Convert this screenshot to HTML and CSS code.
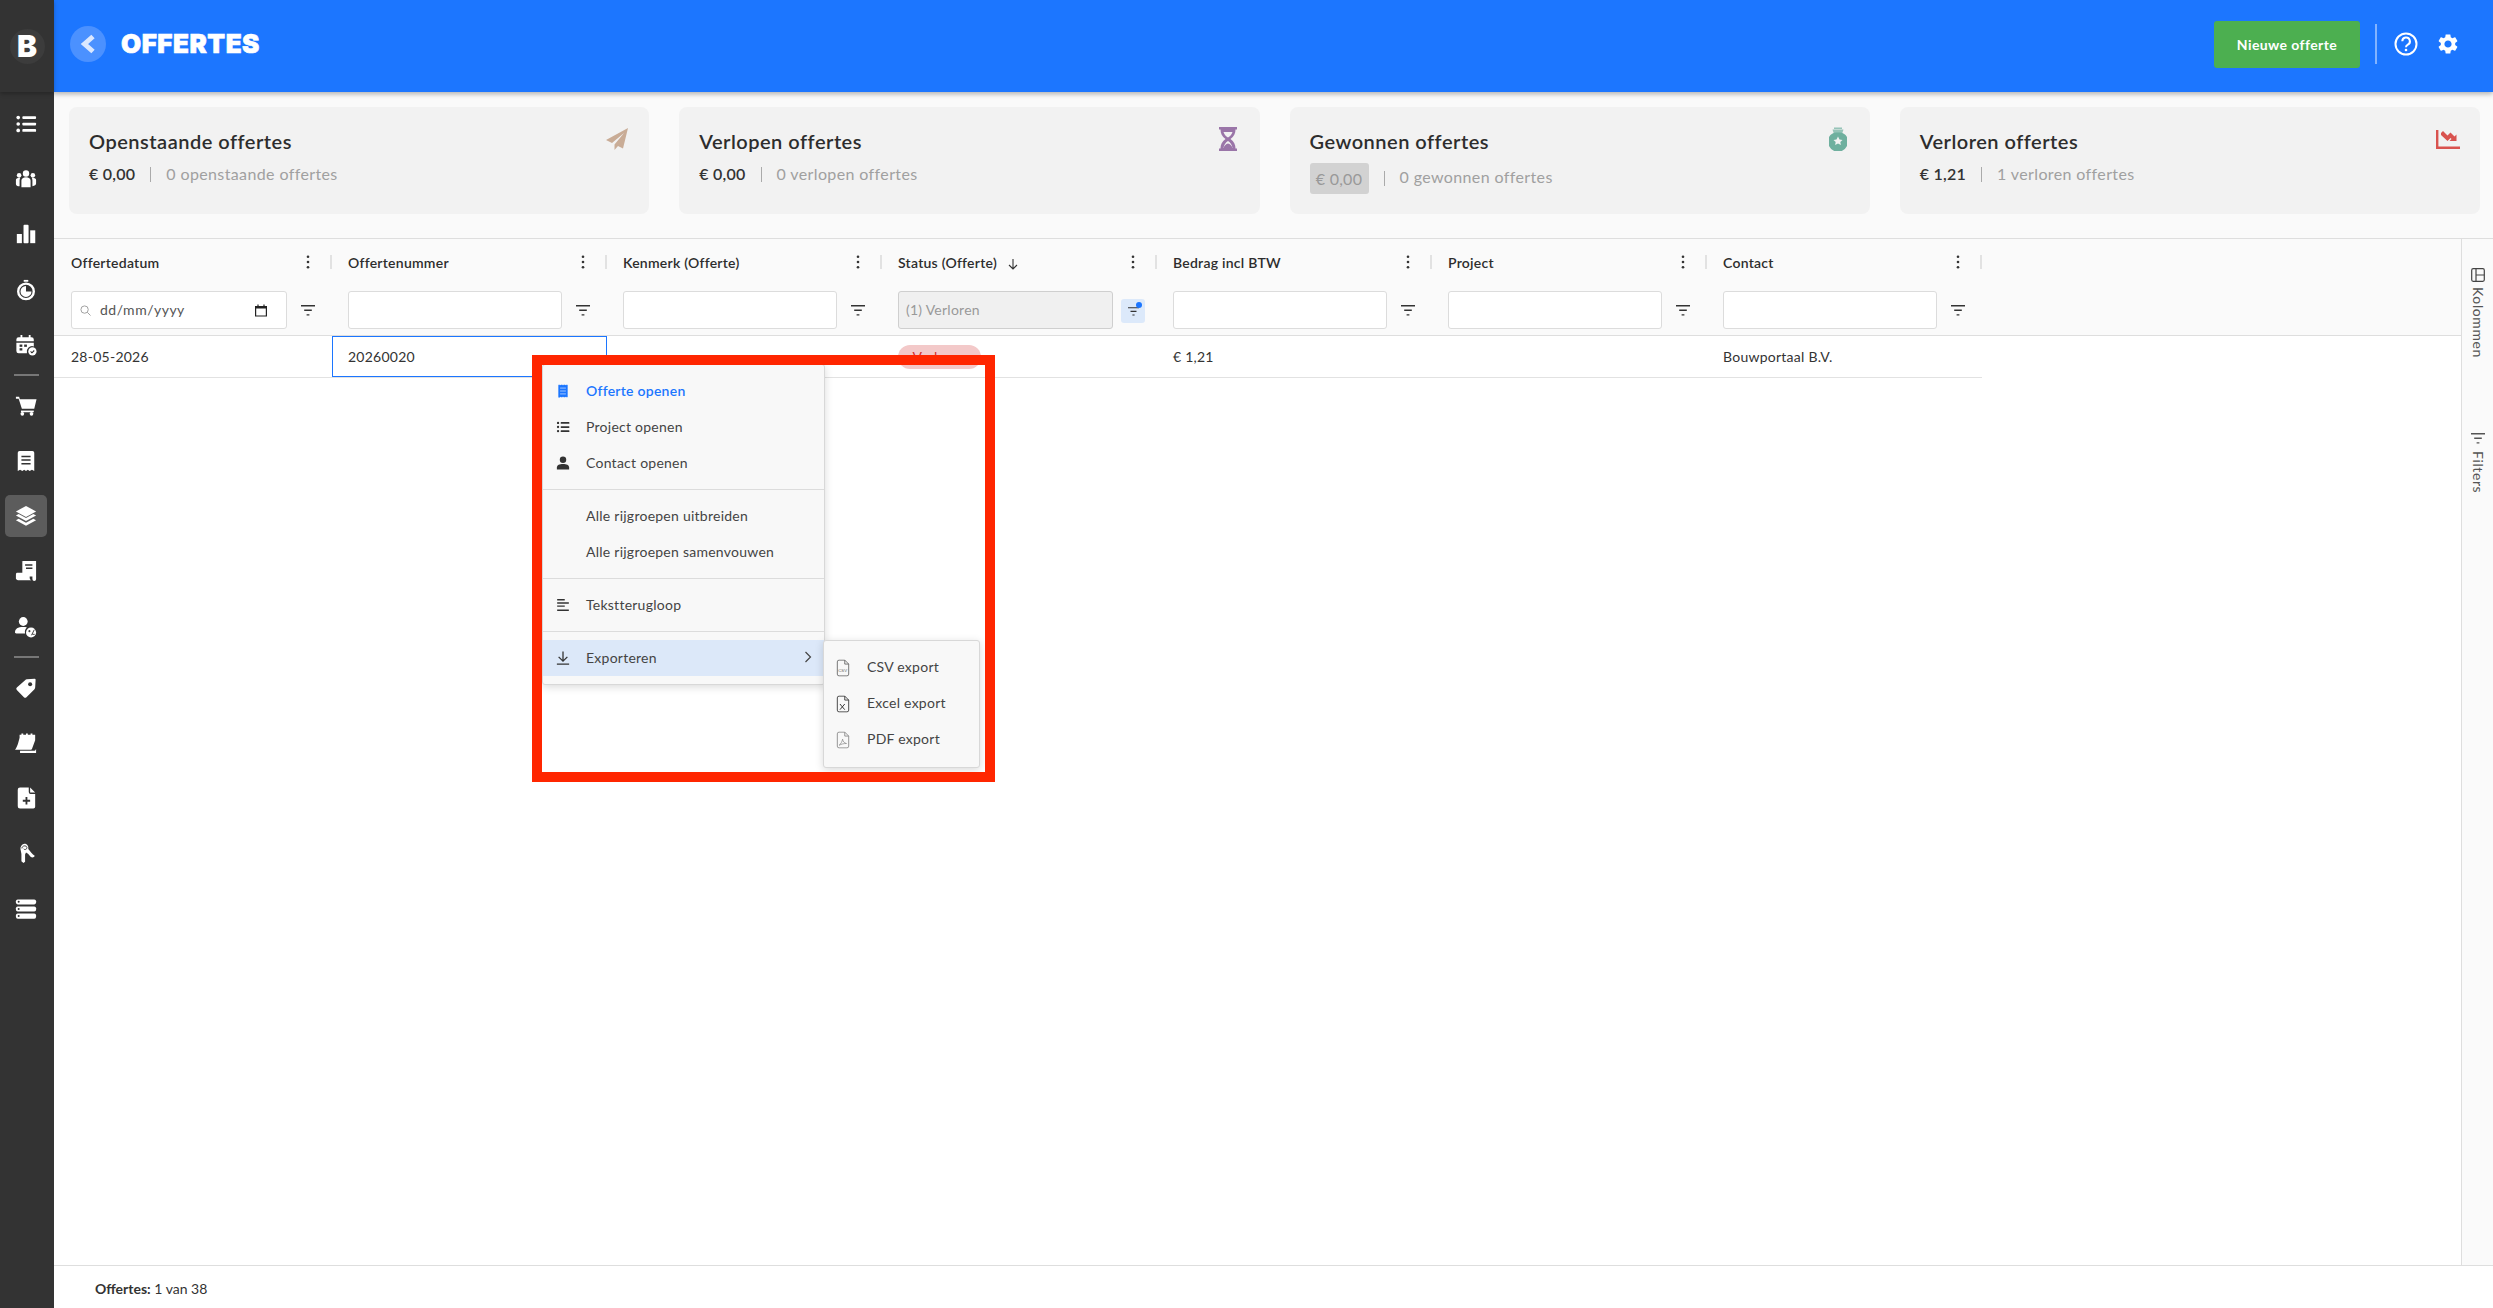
FILE: index.html
```html
<!DOCTYPE html>
<html lang="nl">
<head>
    <meta charset="UTF-8">
    <title>Offertes</title>
    <link rel="stylesheet" href="styles.css">
</head>
<body>
    <svg class="sprite" xmlns="http://www.w3.org/2000/svg">
        <symbol id="i-filter" viewBox="0 0 14 11"><path d="M0 .7h14M3.2 5.3h7.6M5.6 9.9h2.8" stroke="currentColor" stroke-width="1.4" fill="none"/></symbol>
        <symbol id="i-dots" viewBox="0 0 4 16"><circle cx="2" cy="2" r="1.5"/><circle cx="2" cy="8" r="1.5"/><circle cx="2" cy="14" r="1.5"/></symbol>
        <symbol id="i-receipt" viewBox="0 0 24 24"><path d="M4 1l1.300 1 1.300-1 1.300 1 1.400-1 1.300 1L12 1l1.300 1 1.400-1 1.300 1 1.400-1 1.300 1L20 1v22l-1.300-1-1.400 1-1.300-1-1.400 1-1.300-1-1.300 1-1.300-1-1.400 1-1.300-1-1.300 1L4 23z"/><path d="M7 7h10M7 12h10M7 17h10" stroke="#a9caff" stroke-width="1.600" fill="none"/></symbol>
        <symbol id="i-list" viewBox="0 0 24 24"><circle cx="3.500" cy="5" r="2"/><circle cx="3.500" cy="12" r="2"/><circle cx="3.500" cy="19" r="2"/><rect x="8" y="3.500" width="15" height="3" rx="1"/><rect x="8" y="10.500" width="15" height="3" rx="1"/><rect x="8" y="17.500" width="15" height="3" rx="1"/></symbol>
        <symbol id="i-file" viewBox="0 0 16 20"><path d="M1.500 3a2 2 0 0 1 2-2h6.500l4.500 4.500V17a2 2 0 0 1-2 2h-9a2 2 0 0 1-2-2zM10 1v4.500h4.500" fill="none" stroke="currentColor" stroke-width="1"/></symbol>
    </svg>

    <nav class="side">
        <div class="side-logo"><span class="logo-b">B</span></div>
        <div class="side-nav">
            <a class="nav-item"><svg viewBox="0 0 24 24"><use href="#i-list"/></svg></a>
            <a class="nav-item"><svg viewBox="0 0 24 24"><circle cx="12" cy="6" r="3.500"/><circle cx="4.500" cy="8" r="2.500"/><circle cx="19.500" cy="8" r="2.500"/><path d="M7 13.500c0-2 2-3.500 5-3.500s5 1.500 5 3.500V21H7zM1 13c0-1.500 1.500-2.500 3.500-2.500.5 0 1 0 1.200.2-.3.8-.7 1.800-.7 2.800v6.500C2.500 20 1 19 1 17.500zM23 13c0-1.500-1.500-2.500-3.500-2.500-.5 0-1 0-1.200.2.300.8.700 1.800.700 2.800v6.500c2.500-.5 4-1.500 4-3z"/></svg></a>
            <a class="nav-item"><svg viewBox="0 0 24 24"><rect x="2" y="12" width="5.500" height="10"/><rect x="9.300" y="2" width="5.500" height="20" rx="1"/><rect x="16.600" y="8" width="5.500" height="14"/></svg></a>
            <a class="nav-item"><svg viewBox="0 0 24 24"><path d="M9.500 1h5v2h-5z"/><circle cx="12" cy="13.500" r="8.500" fill="none" stroke="#fff" stroke-width="2.600"/><path d="M12 7.500v6h6a6 6 0 1 1-6-6z"/></svg></a>
            <a class="nav-item"><svg viewBox="0 0 24 24"><path d="M6 1h2v2.500h7V1h2v2.500h1a2.500 2.500 0 0 1 2.500 2.500v7.500a6 6 0 0 0-7.500 7.500H4a2.500 2.500 0 0 1-2.500-2.500V6A2.500 2.500 0 0 1 4 3.500h2zM1.500 8v1.500h19V8z"/><rect x="5" y="11.500" width="3" height="2.500" fill="#333"/><rect x="10" y="11.500" width="3" height="2.500" fill="#333"/><rect x="5" y="15.500" width="3" height="2.500" fill="#333"/><circle cx="19" cy="19" r="4.500"/><path d="M17 19l1.500 1.500L21 18" stroke="#333" stroke-width="1.200" fill="none"/></svg></a>
            <div class="nav-sep"></div>
            <a class="nav-item"><svg viewBox="0 0 24 24"><path d="M1 2h3.500l.8 2.500H23.500L21 15H7.500L4 4H1z"/><path d="M6.500 17h14v1.800h-14z"/><circle cx="8" cy="20.500" r="2"/><circle cx="18" cy="20.500" r="2"/></svg></a>
            <a class="nav-item"><svg viewBox="0 0 24 24"><path d="M3 3a2 2 0 0 1 2-2h14a2 2 0 0 1 2 2v20l-2.500-1.500L16 23l-2-1.500L12 23l-2-1.500L8 23l-2.500-1.500L3 23z"/><path d="M7 7h10M7 11h10M7 15h10" stroke="#333" stroke-width="1.600" fill="none"/></svg></a>
            <a class="nav-item active"><svg viewBox="0 0 24 24"><path d="M12 1l11 6-11 6L1 7z"/><path d="M1 11.500l3-1.600 8 4.400 8-4.400 3 1.600-11 6z"/><path d="M1 16.500l3-1.600 8 4.400 8-4.400 3 1.600-11 6z"/></svg></a>
            <a class="nav-item"><svg viewBox="0 0 24 24"><path d="M7 1h16v20a2 2 0 0 1-4 0V2H9zM8 2h11v16H8z"/><path d="M11 5.500h8M12 9h7" stroke="#333" stroke-width="1.600" fill="none"/><path d="M2 14h14v5c0 2 1 3 2 3H4a2.500 2.500 0 0 1-3-3v-3a2 2 0 0 1 1-2z"/></svg></a>
            <a class="nav-item"><svg viewBox="0 0 24 24"><circle cx="9" cy="6" r="4.800"/><path d="M0 18c0-4 3-6 9-6 1.500 0 3 .2 4 .5A6.500 6.500 0 0 0 11 19H1.500C.500 19 0 18.500 0 18z"/><circle cx="17.500" cy="18" r="5.500"/><path d="M14.500 16.500h2.500M15.700 15.300v2.400M18 21l3-6M19 20h2.500" stroke="#333" stroke-width="1" fill="none"/></svg></a>
            <div class="nav-sep"></div>
            <a class="nav-item"><svg viewBox="0 0 24 24"><path d="M13 2.500l8.500-.5a1 1 0 0 1 1 1l-.5 8.500a3 3 0 0 1-1 2L12.500 22a2 2 0 0 1-2.800 0L2 14.300a2 2 0 0 1 0-2.800L11 3.500a3 3 0 0 1 2-1z"/><circle cx="16.500" cy="8" r="2.200" fill="#333"/></svg></a>
            <a class="nav-item"><svg viewBox="0 0 24 24"><path d="M5 3h2V1.500h2V3h3V1.500h2V3h3V1.500h2V3h3v6l-3.500 9.500c-.2.500-.6.800-1.200.800H0c2.500-2.500 4-9 5-13z"/><path d="M5.500 20.500h15c1.200 0 2-.5 2.500-2V23H5.500z"/></svg></a>
            <a class="nav-item"><svg viewBox="0 0 24 24"><path d="M3 3a2.500 2.500 0 0 1 2.500-2.500H15v5a2 2 0 0 0 2 2h5v14a2 2 0 0 1-2 2H5.500A2.500 2.500 0 0 1 3 21z"/><path d="M16.500.500L22 6h-5.500z"/><path d="M12.500 11v8M8.500 15h8" stroke="#333" stroke-width="2" fill="none"/></svg></a>
            <a class="nav-item"><svg viewBox="0 0 24 24"><path d="M10.500 2a5 5 0 0 0-4.500 6l1 5v8l2.200 2 1.800-1.500v-8l1-2c2 1 3 2 5 4.500 1.500 1.500 4 1 4.500-1-2.500-1.500-5-5-7-7.500.5-3-1.500-5.500-4-5.500z"/><path d="M7.500 7c0-3 5-4 5.500-1 .3 2-2.500 3-3.500 1.500" stroke="#333" stroke-width="1" fill="none"/></svg></a>
            <a class="nav-item"><svg viewBox="0 0 24 24"><rect x="1" y="1.500" width="22" height="5.500" rx="2"/><rect x="1" y="9.200" width="22" height="5.500" rx="2"/><rect x="1" y="17" width="22" height="5.500" rx="2"/><circle cx="4" cy="4.200" r="1.100" fill="#333"/><circle cx="4" cy="12" r="1.100" fill="#333"/><circle cx="4" cy="19.700" r="1.100" fill="#333"/></svg></a>
        </div>
    </nav>

    <div class="main">
        <header class="topbar">
            <a class="back"><svg viewBox="0 0 16 20"><path d="M13 2.500L4.500 10l8.500 7.500" fill="none" stroke="#dbe8ff" stroke-width="5"/></svg></a>
            <h1 class="title">OFFERTES</h1>
            <button class="btn-new">Nieuwe offerte</button>
            <span class="top-sep"></span>
            <a class="top-icon"><svg viewBox="0 0 24 24"><circle cx="12" cy="12" r="10.500" fill="none" stroke="#fff" stroke-width="2"/><path d="M8.300 9.300a3.800 3.800 0 1 1 5.600 3.300c-1.300.7-1.900 1.300-1.900 2.700" fill="none" stroke="#fff" stroke-width="2"/><circle cx="12" cy="18" r="1.300" fill="#fff"/></svg></a>
            <a class="top-icon"><svg viewBox="0 0 24 24"><path fill="#fff" d="M19.140 12.940c.04-.3.06-.61.06-.94 0-.32-.02-.64-.07-.94l2.030-1.580c.18-.14.23-.41.12-.61l-1.920-3.320c-.12-.22-.37-.29-.59-.22l-2.390.96c-.5-.38-1.030-.7-1.620-.94l-.36-2.540c-.04-.24-.24-.41-.48-.41h-3.840c-.24 0-.43.17-.47.41l-.36 2.540c-.59.24-1.130.57-1.620.94l-2.390-.96c-.22-.08-.47 0-.59.22L2.740 8.870c-.12.21-.08.47.12.61l2.030 1.580c-.05.3-.09.63-.09.94s.02.64.07.94l-2.030 1.580c-.18.14-.23.41-.12.61l1.920 3.320c.12.22.37.29.59.22l2.390-.96c.5.38 1.030.7 1.620.94l.36 2.540c.05.24.24.41.48.41h3.840c.24 0 .44-.17.47-.41l.36-2.540c.59-.24 1.130-.56 1.620-.94l2.390.96c.22.08.47 0 .59-.22l1.920-3.320c.12-.22.07-.47-.12-.61l-2.010-1.580zM12 15.600c-1.980 0-3.600-1.620-3.600-3.600s1.620-3.600 3.600-3.600 3.600 1.620 3.600 3.600-1.620 3.600-3.600 3.600z"/></svg></a>
        </header>

        <section class="cards">
            <div class="card">
                <h2>Openstaande offertes</h2>
                <div class="card-sub"><b>€ 0,00</b><span class="bar"></span><span class="muted">0 openstaande offertes</span></div>
                <svg class="card-icon" viewBox="0 0 24 24"><path fill="#c9ac96" d="M23 1L1 13l6 3L19 6 9.500 17.500V23l3.500-4 5 2.500z"/></svg>
            </div>
            <div class="card">
                <h2>Verlopen offertes</h2>
                <div class="card-sub"><b>€ 0,00</b><span class="bar"></span><span class="muted">0 verlopen offertes</span></div>
                <svg class="card-icon" viewBox="0 0 24 24"><path fill="#9a75a8" d="M3 0h18v2.500h-1.500c0 4-1.500 7-5 9.500 3.500 2.500 5 5.500 5 9.500H21V24H3v-2.500h1.500c0-4 1.500-7 5-9.500-3.500-2.500-5-5.500-5-9.500H3zM7.500 5c.5 2 2.500 4.500 4.500 5.500 2-1 4-3.500 4.500-5.500zM12 14c-2.500 1.500-4 4-4.500 7h9c-.5-3-2-5.500-4.500-7z"/><path fill="#9a75a8" d="M7.500 21c.8-2.500 2.500-4 4.500-4.500 2 .5 3.700 2 4.500 4.500z"/></svg>
            </div>
            <div class="card">
                <h2>Gewonnen offertes</h2>
                <div class="card-sub"><b class="pill">€ 0,00</b><span class="bar"></span><span class="muted">0 gewonnen offertes</span></div>
                <svg class="card-icon" viewBox="0 0 24 24"><path fill="#6fb09f" d="M8 .5h8V2H8zM6.500 2.500h11L16 7H8z" opacity=".7"/><path fill="#6fb09f" d="M12 5.500a9 9 0 0 1 9 4.500v9a10 10 0 0 1-18 0v-9a9 9 0 0 1 9-4.500z"/><path fill="#f2f2f2" d="M12 9.500l1.500 3 3 .4-2.200 2.200.6 3-2.900-1.500-2.900 1.500.6-3-2.200-2.200 3-.4z"/></svg>
            </div>
            <div class="card">
                <h2>Verloren offertes</h2>
                <div class="card-sub"><b>€ 1,21</b><span class="bar"></span><span class="muted">1 verloren offertes</span></div>
                <svg class="card-icon" viewBox="0 0 24 24"><path fill="#d9534f" d="M0 3h2.400v16.600H24V22H0z"/><path fill="#d9534f" d="M5 6l2-2 4.500 4.500 3-3 4 4 2-2V14h-7l2-2-1-1-3 3L5 8z"/></svg>
            </div>
        </section>

        <div class="content">
            <div class="grid">
                <div class="grid-head">
                    <div class="col first">
                        <div class="col-top"><span class="col-label">Offertedatum</span><svg class="dots"><use href="#i-dots"/></svg><span class="col-sep"></span></div>
                        <div class="col-filter">
                            <div class="fld date">
                                <svg class="fld-search" viewBox="0 0 12 12"><circle cx="5" cy="5" r="4" fill="none" stroke="#999" stroke-width="1"/><path d="M8 8l3.500 3.500" stroke="#999"/></svg>
                                <span>dd/mm/yyyy</span>
                                <svg class="fld-cal" viewBox="0 0 12 13"><path d="M.6 2.500h10.800V12H.6zM3 .5v2M9 .5v2" fill="none" stroke="#222" stroke-width="1.200"/><rect x=".6" y="2" width="10.800" height="2.500" fill="#222"/></svg>
                            </div>
                            <span class="fbtn"><svg><use href="#i-filter"/></svg></span>
                        </div>
                    </div>
                    <div class="col">
                        <div class="col-top"><span class="col-label">Offertenummer</span><svg class="dots"><use href="#i-dots"/></svg><span class="col-sep"></span></div>
                        <div class="col-filter"><div class="fld"></div><span class="fbtn"><svg><use href="#i-filter"/></svg></span></div>
                    </div>
                    <div class="col">
                        <div class="col-top"><span class="col-label">Kenmerk (Offerte)</span><svg class="dots"><use href="#i-dots"/></svg><span class="col-sep"></span></div>
                        <div class="col-filter"><div class="fld"></div><span class="fbtn"><svg><use href="#i-filter"/></svg></span></div>
                    </div>
                    <div class="col">
                        <div class="col-top"><span class="col-label">Status (Offerte) <svg class="sort" viewBox="0 0 12 12"><path d="M6 1v10M2 7l4 4 4-4" fill="none" stroke="#333" stroke-width="1.100"/></svg></span><svg class="dots"><use href="#i-dots"/></svg><span class="col-sep"></span></div>
                        <div class="col-filter"><div class="fld disabled">(1) Verloren</div><span class="fbtn on"><svg><use href="#i-filter"/></svg><i class="fdot"></i></span></div>
                    </div>
                    <div class="col">
                        <div class="col-top"><span class="col-label">Bedrag incl BTW</span><svg class="dots"><use href="#i-dots"/></svg><span class="col-sep"></span></div>
                        <div class="col-filter"><div class="fld"></div><span class="fbtn"><svg><use href="#i-filter"/></svg></span></div>
                    </div>
                    <div class="col">
                        <div class="col-top"><span class="col-label">Project</span><svg class="dots"><use href="#i-dots"/></svg><span class="col-sep"></span></div>
                        <div class="col-filter"><div class="fld"></div><span class="fbtn"><svg><use href="#i-filter"/></svg></span></div>
                    </div>
                    <div class="col">
                        <div class="col-top"><span class="col-label">Contact</span><svg class="dots"><use href="#i-dots"/></svg><span class="col-sep"></span></div>
                        <div class="col-filter"><div class="fld"></div><span class="fbtn"><svg><use href="#i-filter"/></svg></span></div>
                    </div>
                </div>
                <div class="grid-row">
                    <div class="cell first">28-05-2026</div>
                    <div class="cell selected">20260020</div>
                    <div class="cell"></div>
                    <div class="cell"><span class="badge">Verloren</span></div>
                    <div class="cell">€ 1,21</div>
                    <div class="cell"></div>
                    <div class="cell">Bouwportaal B.V.</div>
                </div>
            </div>
            <aside class="tabs">
                <div class="tab tab-cols">
                    <svg viewBox="0 0 14 14"><rect x=".7" y=".7" width="12.600" height="12.600" rx="1.500" fill="none" stroke="#444" stroke-width="1.200"/><path d="M5 .7v12.600M5 7h8.300" stroke="#444" stroke-width="1.200" fill="none"/></svg>
                    <span>Kolommen</span>
                </div>
                <div class="tab tab-filters">
                    <svg viewBox="0 0 14 11"><use href="#i-filter"/></svg>
                    <span>Filters</span>
                </div>
            </aside>
        </div>

        <footer class="foot"><b>Offertes:</b> 1 van 38</footer>
    </div>

    <!-- context menu -->
    <div class="menu ctx">
        <div class="mi primary"><svg class="mi-ic" viewBox="0 0 24 24"><use href="#i-receipt"/></svg><span>Offerte openen</span></div>
        <div class="mi"><svg class="mi-ic" viewBox="0 0 24 24"><use href="#i-list"/></svg><span>Project openen</span></div>
        <div class="mi"><svg class="mi-ic" viewBox="0 0 24 24"><circle cx="12" cy="6.500" r="5.500"/><path d="M1.500 23v-3.500c0-4 4.500-6 10.500-6s10.500 2 10.500 6V23z"/></svg><span>Contact openen</span></div>
        <div class="msep"></div>
        <div class="mi"><span class="mi-ic"></span><span>Alle rijgroepen uitbreiden</span></div>
        <div class="mi"><span class="mi-ic"></span><span>Alle rijgroepen samenvouwen</span></div>
        <div class="msep"></div>
        <div class="mi"><svg class="mi-ic" viewBox="0 0 24 24"><path d="M2 3h13M2 8.500h20M2 14h13M2 21h20" stroke="currentColor" stroke-width="2.400" fill="none"/></svg><span>Tekstterugloop</span></div>
        <div class="msep"></div>
        <div class="mi hover"><svg class="mi-ic" viewBox="0 0 24 24"><path d="M12 1v16M4.500 10l7.500 7.500 7.500-7.500M1.500 22.500h21" stroke="currentColor" stroke-width="2.200" fill="none"/></svg><span>Exporteren</span><svg class="chev" viewBox="0 0 8 12"><path d="M1.500 1l5 5-5 5" fill="none" stroke="#444" stroke-width="1.200"/></svg></div>
    </div>
    <div class="menu sub">
        <div class="mi"><svg class="file-ic" viewBox="0 0 16 20"><use href="#i-file"/><text x="2.500" y="15" class="csv-mark">CSV</text></svg><span>CSV export</span></div>
        <div class="mi"><svg class="file-ic dark" viewBox="0 0 16 20"><use href="#i-file"/><path d="M4.500 10l5.500 6.500M10 10l-5.500 6.500" stroke="currentColor" stroke-width="1.100" fill="none"/></svg><span>Excel export</span></div>
        <div class="mi"><svg class="file-ic pale" viewBox="0 0 16 20"><use href="#i-file"/><path d="M3.500 16c2-1.500 3.500-4 4-7 .5 3 2 4.500 4.500 5-3 0-5.500.5-8.500 2z" stroke="currentColor" stroke-width=".8" fill="none"/></svg><span>PDF export</span></div>
    </div>
    <div class="frame"></div>
</body>
</html>
```
FILE: styles.css
```css
*{
    box-sizing: border-box;
}
html, body{
    height: 100%;
}
body{
    margin: 0;
    display: flex;
    overflow: hidden;
    background-color: #fff;
    color: #333;
    font-family: "Lato", "Noto Sans", sans-serif;
    font-size: 14px;
    letter-spacing: .25px;
}
h1, h2{
    margin: 0;
}
.sprite{
    display: none;
}

/* sidebar */
.side{
    width: 54px;
    flex: none;
    background-color: #333;
    position: relative;
    z-index: 3;
}
.side-logo{
    height: 92px;
    display: flex;
    align-items: center;
    justify-content: center;
    box-shadow: 0 2px 4px rgba(0,0,0,.25);
}
.logo-b{
    width: 35px;
    height: 35px;
    border-radius: 50%;
    background-color: #3c3c3c;
    color: #fff;
    font-family: "Inter", sans-serif;
    font-weight: 900;
    font-size: 30px;
    line-height: 35px;
    text-align: center;
    letter-spacing: 0;
}
.side-nav{
    display: flex;
    flex-direction: column;
    padding-top: 4.4px;
}
.nav-item{
    flex: none;
    display: flex;
    align-items: center;
    justify-content: center;
    width: 42px;
    height: 42px;
    margin: 6.6px 6px 6.6px 5px;
    border-radius: 5px;
    fill: #fff;
    color: #fff;
}
.nav-item svg{
    width: 22px;
    height: 22px;
}
.nav-item.active{
    background-color: #5c5c5c;
}
.nav-sep{
    flex: none;
    height: 2px;
    width: 25px;
    margin: 2px 14px;
    background-color: #777;
}

/* main */
.main{
    flex: 1;
    min-width: 0;
    display: flex;
    flex-direction: column;
    background-color: #fff;
}
.topbar{
    height: 92px;
    flex: none;
    display: flex;
    align-items: center;
    background-color: #1c76ff;
    box-shadow: 0 2px 5px rgba(0,0,0,.3);
    padding: 0 33px 4px 16px;
    position: relative;
    z-index: 2;
}
.back{
    width: 36px;
    height: 36px;
    border-radius: 50%;
    background-color: #4b91ff;
    display: flex;
    align-items: center;
    justify-content: center;
}
.back svg{
    width: 16px;
    height: 20px;
}
.title{
    margin: 0 0 1px 15px;
    flex: 1;
    color: #fff;
    font-family: "Inter", sans-serif;
    font-weight: 900;
    font-size: 26px;
    letter-spacing: .5px;
    -webkit-text-stroke: .6px #fff;
}
.btn-new{
    width: 146px;
    height: 47px;
    border: 0;
    border-radius: 3px;
    background-color: #4caf50;
    color: #fff;
    font-family: "Lato", sans-serif;
    font-size: 14px;
    font-weight: 700;
    letter-spacing: .4px;
}
.top-sep{
    width: 2px;
    height: 40px;
    margin: 0 17px 0 15px;
    background-color: rgba(255,255,255,.45);
}
.top-icon{
    width: 24px;
    height: 24px;
    margin-right: 18px;
}
.top-icon:last-child{
    margin-right: 0;
}

/* cards */
.cards{
    flex: none;
    display: grid;
    grid-template-columns: repeat(4, 1fr);
    gap: 30px;
    padding: 15px 13px 24px 15px;
    background-color: #fafafa;
}
.card{
    position: relative;
    height: 107px;
    padding: 20px;
    border-radius: 8px;
    background-color: #f2f2f2;
}
.card h2{
    font-size: 20px;
    line-height: 28px;
    font-weight: 600;
    color: #2d2d2d;
    letter-spacing: .5px;
}
.card-sub{
    display: flex;
    align-items: center;
    margin-top: 8px;
    line-height: 22px;
    font-size: 16px;
}
.card-sub b{
    font-weight: 600;
}
.card-sub .pill{
    height: 31px;
    width: 59px;
    line-height: 31px;
    text-align: center;
    border-radius: 3px;
    background-color: #d2d2d2;
    color: #999;
    font-weight: 400;
}
.pill ~ .muted{
    margin-bottom: 3px;
}
.bar{
    width: 1px;
    height: 15px;
    margin: 0 15px;
    background-color: #aaa;
}
.muted{
    color: #a0a0a0;
    letter-spacing: .38px;
}
.card-icon{
    position: absolute;
    top: 20px;
    right: 20px;
    width: 24px;
    height: 24px;
}

/* grid */
.content{
    flex: 1;
    display: flex;
    min-height: 0;
    border-top: 1px solid #dedede;
}
.grid{
    flex: 1;
    min-width: 0;
}
.grid-head, .grid-row{
    display: grid;
    grid-template-columns: 278px repeat(6, 275px);
}
.grid-head{
    height: 97px;
    background-color: #fafafa;
    border-bottom: 1px solid #dedede;
}
.col{
    padding-left: 16px;
}
.col.first{
    padding-left: 17px;
}
.col-top{
    height: 46px;
    display: flex;
    align-items: center;
}
.col-label{
    flex: 1;
    font-weight: 600;
    font-size: 14px;
    color: #2d2d2d;
}
.sort{
    width: 12px;
    height: 12px;
    margin-left: 6px;
    vertical-align: -2px;
}
.dots{
    width: 4px;
    height: 14px;
    margin: 0 20px 0 10px;
    fill: #333;
}
.col-sep{
    width: 2px;
    height: 14px;
    background-color: #e2e2e2;
}
.col-filter{
    display: flex;
    margin-top: 6px;
}
.fld{
    flex: 1;
    height: 38px;
    padding: 0 7px;
    border: 1px solid #dcdcdc;
    border-radius: 3px;
    background-color: #fff;
    line-height: 36px;
    font-size: 14px;
}
.fld.disabled{
    background-color: #f0f0f0;
    border-color: #cfcfcf;
    color: #999;
}
.fld.date{
    display: flex;
    align-items: center;
    color: #555;
    letter-spacing: .5px;
}
.fld-search{
    width: 11px;
    height: 11px;
    margin: 0 9px 0 1px;
}
.fld-cal{
    width: 12px;
    height: 13px;
    margin-left: auto;
    margin-right: 12px;
}
.fbtn{
    flex: none;
    position: relative;
    width: 42px;
    margin-right: 3px;
    height: 38px;
    display: flex;
    align-items: center;
    justify-content: center;
    color: #333;
}
.fbtn svg{
    width: 14px;
    height: 11px;
}
.fbtn.on{
    width: 24px;
    height: 24px;
    margin: 8px 12px 6px 8px;
    border-radius: 3px;
    background-color: #dce9fa;
}
.fbtn.on svg{
    width: 11px;
}
.fdot{
    position: absolute;
    top: 3px;
    right: 3px;
    width: 6px;
    height: 6px;
    border-radius: 50%;
    background-color: #1c76ff;
}
.grid-row{
    width: 1928px;
    height: 42px;
    border-bottom: 1px solid #e2e2e2;
}
.cell{
    display: flex;
    align-items: center;
    padding-left: 16px;
    font-size: 14px;
}
.cell.first{
    padding-left: 17px;
}
.cell.selected{
    padding-left: 15px;
    border: 1px solid #1c76ff;
}
.badge{
    width: 83px;
    height: 24px;
    line-height: 24px;
    text-align: center;
    border-radius: 12px;
    background-color: #f3c9c9;
    color: #d32f2f;
}

/* side tabs */
.tabs{
    width: 32px;
    flex: none;
    border-left: 1px solid #dedede;
    background-color: #fafafa;
}
.tab{
    display: flex;
    flex-direction: column;
    align-items: center;
    color: #555;
    font-size: 14px;
}
.tab svg{
    width: 14px;
    height: 14px;
    margin-bottom: 5px;
}
.tab-filters svg{
    height: 11px;
    margin-bottom: 7px;
}
.tab span{
    writing-mode: vertical-rl;
    letter-spacing: .6px;
    margin-left: 2px;
}
.tab-cols{
    padding-top: 29px;
}
.tab-filters{
    margin-top: 75px;
}
.foot{
    flex: none;
    height: 43px;
    line-height: 45px;
    padding-left: 41px;
    border-top: 1px solid #dedede;
    font-size: 14px;
    letter-spacing: 0;
}

/* context menu, lies over the grid */
.menu{
    position: absolute;
    z-index: 5;
    background-color: #f8f8f8;
    border: 1px solid #d8d8d8;
    border-radius: 3px;
    padding: 8px 0;
    box-shadow: 0 2px 8px rgba(0,0,0,.15);
}
.ctx{
    left: 542px;
    top: 364px;
    width: 283px;
}
.sub{
    left: 823px;
    top: 640px;
    width: 157px;
    height: 128px;
    z-index: 6;
}
.mi{
    height: 36px;
    display: flex;
    align-items: center;
    padding-bottom: 2px;
    color: #444;
    fill: #333;
}
.mi-ic{
    width: 14px;
    height: 14px;
    margin: 1px 16px 0 13px;
    color: #333;
    flex: none;
}
.mi.primary{
    color: #1c76ff;
    fill: #1c76ff;
    font-weight: 600;
}
.mi.hover{
    background-color: #dce8f9;
}
.chev{
    width: 8px;
    height: 12px;
    margin-left: auto;
    margin-right: 12px;
}
.msep{
    height: 1px;
    margin: 8px 0;
    background-color: #dcdcdc;
}
.file-ic{
    width: 14px;
    height: 18px;
    margin: 3px 17px 0 12px;
    flex: none;
    color: #666;
}
.file-ic.dark{
    color: #333;
}
.file-ic.pale{
    color: #888;
}
.csv-mark{
    font-family: "Liberation Sans", sans-serif;
    font-size: 5px;
    fill: #666;
    letter-spacing: 0;
}
.frame{
    position: absolute;
    left: 532px;
    top: 355px;
    width: 463px;
    height: 427px;
    border: 10px solid #ff2600;
    z-index: 7;
}
```
